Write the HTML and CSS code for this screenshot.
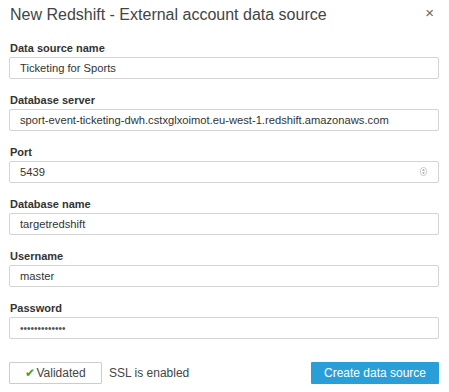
FILE: index.html
```html
<!DOCTYPE html>
<html lang="en">
<head>
    <meta charset="UTF-8">
    <title>New Redshift - External account data source</title>
    <link rel="stylesheet" href="styles.css">
</head>
<body>
    <div class="dialog">
        <div class="header">
            <h1>New Redshift - External account data source</h1>
            <span class="close">&times;</span>
        </div>
        <form class="form">
            <div class="field">
                <label for="dsname">Data source name</label>
                <input type="text" id="dsname" value="Ticketing for Sports">
            </div>
            <div class="field">
                <label for="server">Database server</label>
                <input type="text" id="server" value="sport-event-ticketing-dwh.cstxglxoimot.eu-west-1.redshift.amazonaws.com">
            </div>
            <div class="field">
                <label for="port">Port</label>
                <div class="spin">
                    <input type="text" id="port" value="5439">
                    <span class="spin-arrows">
                        <svg width="7" height="9" viewBox="0 0 7 9">
                            <rect x="0.5" y="0.5" width="6" height="8" rx="3" fill="none" stroke="#bbb" stroke-width="0.8"/>
                            <path d="M2 3.6 L3.5 2.2 L5 3.6 Z" fill="#777"/>
                            <path d="M2 5.4 L3.5 6.8 L5 5.4 Z" fill="#777"/>
                        </svg>
                    </span>
                </div>
            </div>
            <div class="field">
                <label for="dbname">Database name</label>
                <input type="text" id="dbname" value="targetredshift">
            </div>
            <div class="field">
                <label for="user">Username</label>
                <input type="text" id="user" value="master">
            </div>
            <div class="field">
                <label for="pass">Password</label>
                <input type="password" id="pass" class="secret" value="sportsticket1">
            </div>
            <div class="actions">
                <button type="button" class="btn-validated"><span class="check">&#10004;</span>Validated</button>
                <span class="ssl">SSL is enabled</span>
                <button type="submit" class="btn-create">Create data source</button>
            </div>
        </form>
    </div>
</body>
</html>
```

FILE: styles.css
```css
body {
    margin: 0;
    background-color: #ffffff;
    font-family: 'Liberation Sans', Arial, sans-serif;
    color: #333;
}
.dialog {
    width: 430px;
    padding: 4px 10px 0 9px;
}
.header {
    display: flex;
    justify-content: space-between;
    align-items: center;
    height: 22px;
    margin-bottom: 15px;
}
h1 {
    margin: 0 0 0 1px;
    font-size: 16px;
    font-weight: normal;
    color: #444;
}
.close {
    font-size: 15px;
    color: #666;
    margin-right: 5px;
    margin-top: -6px;
}
.field {
    margin-bottom: 14px;
}
label {
    display: block;
    font-size: 11px;
    font-weight: bold;
    line-height: 14px;
    margin: 0 0 2px 1px;
    color: #333;
}
input {
    display: block;
    box-sizing: border-box;
    width: 100%;
    height: 22px;
    padding: 0 10px;
    border: 1px solid #d4d4d4;
    border-radius: 2px;
    font-family: 'Liberation Sans', Arial, sans-serif;
    font-size: 11.2px;
    color: #333;
    background-color: #fff;
    outline: none;
}
input.secret {
    font-size: 10px;
    color: #555;
}
.spin {
    position: relative;
}
.spin-arrows {
    position: absolute;
    right: 12px;
    top: 6px;
    line-height: 0;
}
.actions {
    display: flex;
    align-items: center;
    margin-top: 23px;
}
button {
    height: 22px;
    font-family: 'Liberation Sans', Arial, sans-serif;
    font-size: 12px;
    cursor: pointer;
    border-radius: 1px;
}
.btn-validated {
    width: 93px;
    background-color: #fff;
    border: 1px solid #ccc;
    color: #444;
    padding: 0;
}
.check {
    color: #3aa335;
    font-size: 12px;
    margin-right: 1px;
}
.ssl {
    font-size: 12px;
    color: #444;
    margin-left: 7px;
}
.btn-create {
    margin-left: auto;
    width: 128px;
    background-color: #2a9ed8;
    border: none;
    color: #fff;
}
```
